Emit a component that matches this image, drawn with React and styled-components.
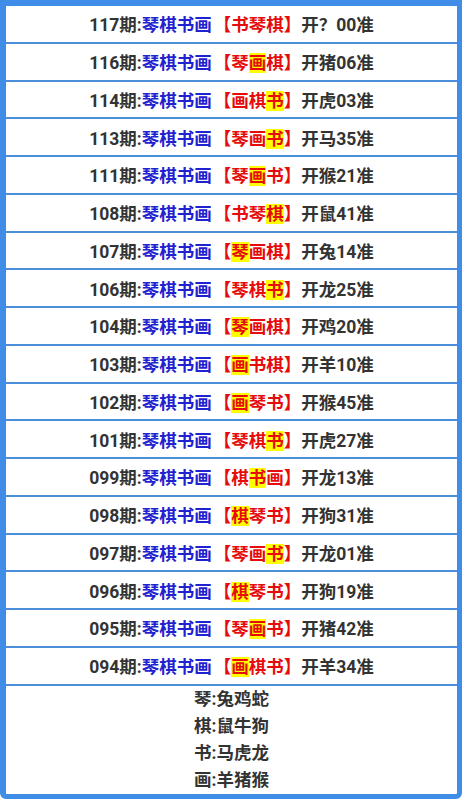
import React from 'react';
import styled, { createGlobalStyle } from 'styled-components';

const GlobalStyle = createGlobalStyle`
  html, body {
    margin: 0;
    padding: 0;
    background: #ffffff;
  }
  body {
    font-family: Roboto, "Noto Sans CJK SC", sans-serif;
  }
`;

const Frame = styled.div`
  width: 462px;
  box-sizing: border-box;
  border: 5px solid #3f8de6;
  border-left-width: 6px;
  border-top-width: 6px;
  border-radius: 0 0 6px 6px;
  background: #fff;
`;

const Row = styled.div`
  height: 35.75px;
  display: flex;
  align-items: center;
  justify-content: center;
  border-bottom: 2px solid #4a8fd8;
  font-size: 17.5px;
  font-weight: 700;
  color: #333;
  white-space: nowrap;
`;

const Blue = styled.span`
  color: #1f22d0;
`;

const Red = styled.span`
  color: #e60c0c;
  margin-left: 2px;
`;

const Hit = styled.span`
  background: #ffff00;
`;

const Legend = styled.div`
  display: flex;
  flex-direction: column;
  align-items: center;
  font-size: 17.5px;
  font-weight: 700;
  line-height: 27px;
  color: #333;
`;

const rows = [
  ['117', '书琴棋', -1, '开？00准'],
  ['116', '琴画棋', 1, '开猪06准'],
  ['114', '画棋书', 2, '开虎03准'],
  ['113', '琴画书', 2, '开马35准'],
  ['111', '琴画书', 1, '开猴21准'],
  ['108', '书琴棋', 2, '开鼠41准'],
  ['107', '琴画棋', 0, '开兔14准'],
  ['106', '琴棋书', 2, '开龙25准'],
  ['104', '琴画棋', 0, '开鸡20准'],
  ['103', '画书棋', 0, '开羊10准'],
  ['102', '画琴书', 0, '开猴45准'],
  ['101', '琴棋书', 2, '开虎27准'],
  ['099', '棋书画', 1, '开龙13准'],
  ['098', '棋琴书', 0, '开狗31准'],
  ['097', '琴画书', 2, '开龙01准'],
  ['096', '棋琴书', 0, '开狗19准'],
  ['095', '琴画书', 1, '开猪42准'],
  ['094', '画棋书', 0, '开羊34准'],
];

const legend = ['琴:兔鸡蛇', '棋:鼠牛狗', '书:马虎龙', '画:羊猪猴'];

const Pick = ({ chars, hit }) => (
  <Red>
    【
    {chars.split('').map((c, i) =>
      i === hit ? <Hit key={i}>{c}</Hit> : <span key={i}>{c}</span>
    )}
    】
  </Red>
);

export default function App() {
  return (
    <>
      <GlobalStyle />
      <Frame>
        {rows.map(([issue, chars, hit, result]) => (
          <Row key={issue}>
            {issue}期:<Blue>琴棋书画</Blue>
            <Pick chars={chars} hit={hit} />
            {result}
          </Row>
        ))}
        <Legend>
          {legend.map(line => (
            <div key={line}>{line}</div>
          ))}
        </Legend>
      </Frame>
    </>
  );
}
